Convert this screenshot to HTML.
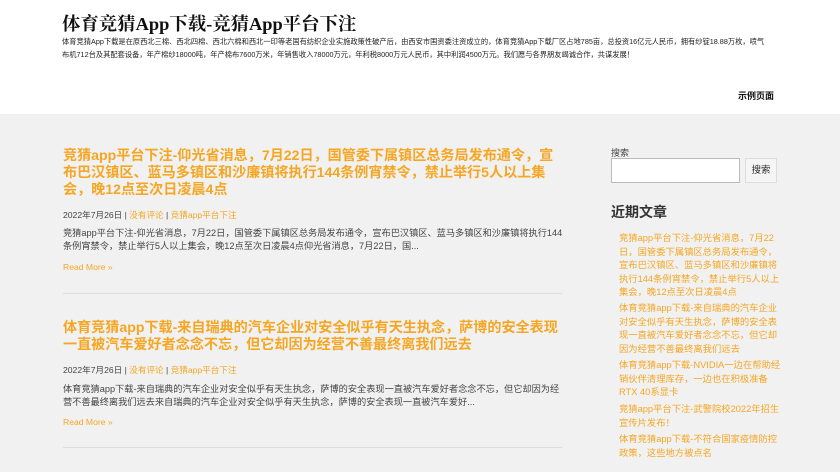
<!DOCTYPE html>
<html><head><meta charset="utf-8"><style>
*{margin:0;padding:0;box-sizing:border-box}
body{width:840px;height:472px;overflow:hidden;background:#f1f1f1;font-family:"Liberation Sans","Noto Sans CJK SC",sans-serif;color:#333;position:relative}
.hd{position:absolute;left:0;top:0;width:840px;height:114px;background:#fff}
.a{position:absolute;white-space:nowrap}
.t{left:62px;top:10px;font-size:18.4px;font-weight:bold;color:#111;font-family:"Liberation Serif","Noto Serif CJK SC",serif}
.d{left:62px;font-size:7.25px;color:#222;line-height:13px}
.o{color:#f5a623}
.pt{left:63px;font-size:14.1px;font-weight:bold;line-height:17px;color:#f5a623}
.m{left:63px;font-size:8.6px;color:#444}
.ex{left:63px;font-size:9.2px;color:#444;line-height:13px}
.rm{left:63px;font-size:8.6px;color:#f5a623}
.sep{position:absolute;left:63px;width:499px;height:1px;background:#ddd}
.rl{left:619px;font-size:9.3px;line-height:13.6px;color:#f5a623}
</style></head><body>
<div class="hd"></div>
<div class="a t">体育竞猜App下载-竞猜App平台下注</div>
<div class="a d" style="top:35px">体育竞猜App下载是在原西北三棉、西北四棉、西北六棉和西北一印等老国有纺织企业实施政策性破产后，由西安市国资委注资成立的，体育竞猜App下载厂区占地785亩，总投资16亿元人民币，拥有纱锭18.88万枚，喷气<br>布机712台及其配套设备，年产棉纱18000吨，年产棉布7600万米，年销售收入78000万元，年利税8000万元人民币，其中利润4500万元。我们愿与各界朋友竭诚合作，共谋发展！</div>
<div class="a" style="left:738px;top:89px;font-size:9px;font-weight:bold;color:#111">示例页面</div>

<div class="a pt" style="top:147px">竞猜app平台下注-仰光省消息，7月22日，国管委下属镇区总务局发布通令，宣<br>布巴汉镇区、蓝马多镇区和沙廉镇将执行144条例宵禁令，禁止举行5人以上集<br>会，晚12点至次日凌晨4点</div>
<div class="a m" style="top:209px">2022年7月26日 | <span class="o">没有评论</span> | <span class="o">竞猜app平台下注</span></div>
<div class="a ex" style="top:227px">竞猜app平台下注-仰光省消息，7月22日，国管委下属镇区总务局发布通令，宣布巴汉镇区、蓝马多镇区和沙廉镇将执行144<br>条例宵禁令，禁止举行5人以上集会，晚12点至次日凌晨4点仰光省消息，7月22日，国...</div>
<div class="a rm" style="top:262px">Read More »</div>
<div class="sep" style="top:293px"></div>

<div class="a pt" style="top:319px">体育竞猜app下载-来自瑞典的汽车企业对安全似乎有天生执念，萨博的安全表现<br>一直被汽车爱好者念念不忘，但它却因为经营不善最终离我们远去</div>
<div class="a m" style="top:364px">2022年7月26日 | <span class="o">没有评论</span> | <span class="o">竞猜app平台下注</span></div>
<div class="a ex" style="top:383px">体育竞猜app下载-来自瑞典的汽车企业对安全似乎有天生执念，萨博的安全表现一直被汽车爱好者念念不忘，但它却因为经<br>营不善最终离我们远去来自瑞典的汽车企业对安全似乎有天生执念，萨博的安全表现一直被汽车爱好...</div>
<div class="a rm" style="top:417px">Read More »</div>
<div class="sep" style="top:447px"></div>

<div class="a" style="left:611px;top:146px;font-size:9px;color:#444">搜索</div>
<div class="a" style="left:611px;top:158px;width:129px;height:25px;background:#fff;border:1px solid #bbb"></div>
<div class="a" style="left:745px;top:158px;width:32px;height:25px;background:#f5f5f5;border:1px solid #ddd;font-size:9.5px;color:#333;text-align:center;line-height:23px">搜索</div>
<div class="a" style="left:611px;top:202px;font-size:14px;font-weight:bold;color:#333">近期文章</div>
<div class="a rl" style="top:232px">竞猜app平台下注-仰光省消息，7月22<br>日，国管委下属镇区总务局发布通令，<br>宣布巴汉镇区、蓝马多镇区和沙廉镇将<br>执行144条例宵禁令，禁止举行5人以上<br>集会，晚12点至次日凌晨4点</div>
<div class="a rl" style="top:302px">体育竞猜app下载-来自瑞典的汽车企业<br>对安全似乎有天生执念，萨博的安全表<br>现一直被汽车爱好者念念不忘，但它却<br>因为经营不善最终离我们远去</div>
<div class="a rl" style="top:359px">体育竞猜app下载-NVIDIA一边在帮助经<br>销伙伴清理库存，一边也在积极准备<br>RTX 40系显卡</div>
<div class="a rl" style="top:403px">竞猜app平台下注-武警院校2022年招生<br>宣传片发布！</div>
<div class="a rl" style="top:433px">体育竞猜app下载-不符合国家疫情防控<br>政策，这些地方被点名</div>
</body></html>
